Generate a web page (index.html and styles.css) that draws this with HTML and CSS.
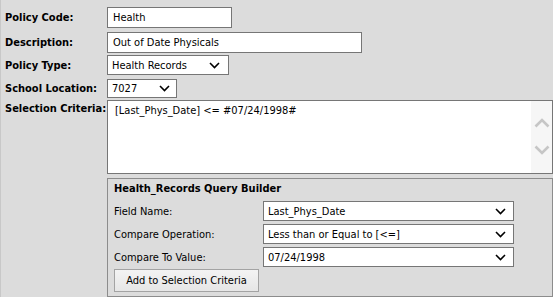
FILE: index.html
```html
<!DOCTYPE html>
<html>
<head>
<meta charset="utf-8">
<link rel="stylesheet" href="styles.css">
</head>
<body>
<div class="page">
  <div class="form">
    <div class="label r1">Policy Code:</div>
    <div class="field r1"><div class="input w-code">Health</div></div>

    <div class="label r2">Description:</div>
    <div class="field r2"><div class="input w-desc">Out of Date Physicals</div></div>

    <div class="label r3">Policy Type:</div>
    <div class="field r3">
      <div class="select w-type"><span class="val">Health Records</span>
        <svg class="chev" width="11" height="7" viewBox="0 0 11 7"><path d="M1 1 L5.5 5.5 L10 1" fill="none" stroke="#000" stroke-width="1.6"/></svg>
      </div>
    </div>

    <div class="label r4">School Location:</div>
    <div class="field r4">
      <div class="select w-loc"><span class="val">7027</span>
        <svg class="chev" width="11" height="7" viewBox="0 0 11 7"><path d="M1 1 L5.5 5.5 L10 1" fill="none" stroke="#000" stroke-width="1.6"/></svg>
      </div>
    </div>

    <div class="label r5 top">Selection Criteria:</div>
    <div class="field r5">
      <div class="textarea">
        <div class="ta-text">[Last_Phys_Date] &lt;= #07/24/1998#</div>
        <div class="scrollbar">
          <svg width="16" height="10" viewBox="0 0 16 10"><path d="M1.5 8.5 L8 2 L14.5 8.5" fill="none" stroke="#c6c6c6" stroke-width="2.6"/></svg>
          <svg width="16" height="10" viewBox="0 0 16 10"><path d="M1.5 1.5 L8 8 L14.5 1.5" fill="none" stroke="#c6c6c6" stroke-width="2.6"/></svg>
        </div>
      </div>
    </div>

    <div class="field r6">
      <div class="qb">
        <div class="qb-title">Health_Records Query Builder</div>
        <div class="qb-grid">
          <div class="qb-label">Field Name:</div>
          <div class="select w-qb"><span class="val">Last_Phys_Date</span>
            <svg class="chev" width="11" height="7" viewBox="0 0 11 7"><path d="M1 1 L5.5 5.5 L10 1" fill="none" stroke="#000" stroke-width="1.6"/></svg>
          </div>
          <div class="qb-label">Compare Operation:</div>
          <div class="select w-qb"><span class="val">Less than or Equal to [&lt;=]</span>
            <svg class="chev" width="11" height="7" viewBox="0 0 11 7"><path d="M1 1 L5.5 5.5 L10 1" fill="none" stroke="#000" stroke-width="1.6"/></svg>
          </div>
          <div class="qb-label">Compare To Value:</div>
          <div class="select w-qb"><span class="val">07/24/1998</span>
            <svg class="chev" width="11" height="7" viewBox="0 0 11 7"><path d="M1 1 L5.5 5.5 L10 1" fill="none" stroke="#000" stroke-width="1.6"/></svg>
          </div>
        </div>
        <button class="btn">Add to Selection Criteria</button>
      </div>
    </div>
  </div>
</div>
</body>
</html>
```

FILE: styles.css
```css
html, body {
  margin: 0;
  padding: 0;
  height: 100%;
  overflow: hidden;
}
body {
  background: #dcdcdc;
  font-family: "DejaVu Sans Condensed", "DejaVu Sans", sans-serif;
  font-size: 11px;
  color: #000;
}
.page {
  height: 100%;
  border-left: 1px solid #c8c8c8;
  box-sizing: border-box;
}
.form {
  display: grid;
  grid-template-columns: 102px 1fr;
  padding: 7px 0 0 4px;
}
.label {
  font-weight: bold;
  display: flex;
  align-items: center;
}
.label.top {
  align-items: flex-start;
  padding-top: 2px;
}
.field {
  grid-column: 2;
  display: flex;
}
.label.r1, .field.r1 { grid-row: 1; }
.label.r2, .field.r2 { grid-row: 2; }
.label.r3, .field.r3 { grid-row: 3; }
.label.r4, .field.r4 { grid-row: 4; }
.label.r5, .field.r5 { grid-row: 5; }
.field.r6 { grid-row: 6; }

.r2 { margin-top: 4px; }
.r3 { margin-top: 2px; }
.r4 { margin-top: 4px; }
.r5 { margin-top: 2px; }
.r6 { margin-top: 4px; }

.input, .select, .textarea {
  background: #fff;
  border: 1px solid #767676;
  box-sizing: border-box;
}
.input {
  height: 21px;
  padding: 0 5px;
  display: flex;
  align-items: center;
}
.w-code { width: 125px; }
.w-desc { width: 255px; }

.select {
  display: flex;
  align-items: center;
  justify-content: space-between;
  padding: 0 8px 0 4px;
  height: 20px;
}
.w-type { width: 122px; height: 20px; }
.w-loc { width: 70px; height: 19px; padding-right: 6px; }
.w-qb { width: 251px; height: 20px; padding-right: 7px; }
.chev { flex: none; }

.textarea {
  width: 446px;
  height: 74px;
  display: flex;
  justify-content: space-between;
}
.ta-text {
  padding: 3px 0 0 7px;
}
.scrollbar {
  width: 21px;
  background: #f6f6f6;
  display: flex;
  flex-direction: column;
  align-items: center;
  padding-top: 17px;
  gap: 17px;
  box-sizing: border-box;
}

.qb {
  width: 446px;
  height: 119px;
  border: 1px solid #8c8c8c;
  box-sizing: border-box;
  padding: 0 0 0 6px;
}
.qb-title {
  font-weight: bold;
  height: 18px;
  display: flex;
  align-items: center;
}
.qb-grid {
  display: grid;
  grid-template-columns: 149px auto;
  grid-auto-rows: 20px;
  row-gap: 3px;
  margin-top: 4px;
  justify-content: start;
}
.qb-label {
  display: flex;
  align-items: center;
}
.btn {
  display: block;
  margin-top: 2px;
  font-family: inherit;
  font-size: 11px;
  color: #000;
  background: linear-gradient(#f3f3f3, #e6e6e6);
  border: 1px solid #a3a3a3;
  height: 23px;
  width: 145px;
  padding: 0;
}
```
